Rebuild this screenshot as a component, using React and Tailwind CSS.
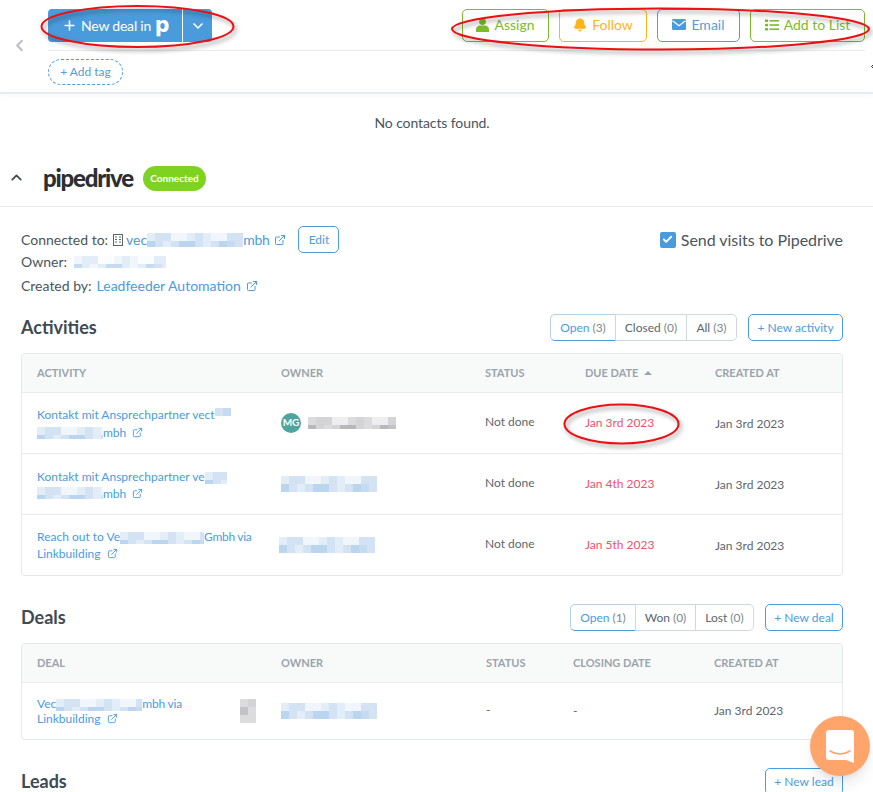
import { ChevronLeft, ChevronUp, ChevronDown, Plus, Bell, ExternalLink, Check } from 'lucide-react';

const blues = ['#fafcfe', '#f1f6fc', '#e3edf8', '#d3e3f4', '#c6dbf1', '#b9d5ef'];
const grays = ['#f7f7f8', '#eeeeef', '#dcdcde', '#d4d3d6', '#c3c3c7', '#b8b8bc'];

// pixelated name, the reference has these smeared out
function Blur({ w, h, palette = blues, cell = 8, bias = 2, className = '' }) {
  const cols = Math.ceil(w / cell);
  const rows = Math.ceil(h / cell);
  const cells = [];
  for (let r = 0; r < rows; r++) {
    for (let c = 0; c < cols; c++) {
      const wave = (Math.sin(c * 1.3 + r * 2.1) + 1) * 1.5;
      const rowBias = rows > 1 ? (r / (rows - 1)) * 1.5 : 0.5;
      const idx = Math.min(palette.length - 1, Math.floor(wave + rowBias + bias - 1));
      cells.push(<rect key={`${r}-${c}`} x={c * cell} y={r * cell} width={cell} height={cell} fill={palette[idx]} />);
    }
  }
  return (
    <svg width={w} height={h} className={`inline-block shrink-0 ${className}`}>
      {cells}
    </svg>
  );
}

function Ext({ size = 12, className = '' }) {
  return <ExternalLink size={size} strokeWidth={2} className={`inline-block text-[#4a9be0] ${className}`} />;
}

function PersonIcon() {
  return (
    <svg width="13" height="14" viewBox="0 0 13 14" fill="currentColor">
      <circle cx="6.5" cy="3.6" r="3.4" />
      <path d="M0 14v-2.6C0 9.2 1.9 7.8 4 7.6h5c2.100.2 4 1.600 4 3.800V14z" />
    </svg>
  );
}

function BellIcon() {
  return <Bell size={14} strokeWidth={2.5} fill="currentColor" />;
}

function MailIcon() {
  return (
    <svg width="14" height="11" viewBox="0 0 14 11">
      <rect width="14" height="11" rx="1.2" fill="#4a9bdc" />
      <path d="M0.500 1.800 7 6.800l6.500-5" fill="none" stroke="#fff" strokeWidth="1.200" />
    </svg>
  );
}

function ListIcon() {
  return (
    <svg width="14" height="12" viewBox="0 0 14 12" fill="currentColor">
      <rect x="0" y="0.500" width="3" height="2.500" />
      <rect x="0" y="4.800" width="3" height="2.500" />
      <rect x="0" y="9" width="3" height="2.500" />
      <rect x="4.500" y="1" width="9.500" height="1.600" />
      <rect x="4.500" y="5.200" width="9.500" height="1.600" />
      <rect x="4.500" y="9.400" width="9.500" height="1.600" />
    </svg>
  );
}

function ActionButton({ icon, label, color, width }) {
  return (
    <button className={`h-[33px] pb-[2px] flex items-center justify-center gap-[5px] border rounded-[5px] text-sm ${color} ${width}`}>
      {icon}
      {label}
    </button>
  );
}

function SegTabs({ tabs, className = '' }) {
  return (
    <div className={`flex h-[27px] text-xs text-[#5b6670] ${className}`}>
      {tabs.map((t, i) => (
        <div
          key={t.label}
          className={`flex items-center justify-center gap-[3px] border-y ${t.width} ${
            i === 0
              ? 'border-l border-r border-t-[#b5cfe3] border-l-[#b5cfe3] border-r-[#cfd8de] border-b-[#4a9be0] rounded-l-[5px] text-[#4a9be0]'
              : 'border-r border-[#cfd8de]'
          } ${i === tabs.length - 1 ? 'rounded-r-[5px]' : ''}`}
        >
          <span>{t.label}</span>
          <span className="text-[#7d8890]">({t.count})</span>
        </div>
      ))}
    </div>
  );
}

function SectionHead({ title, tabs, action, actionW }) {
  return (
    <div className="flex items-center h-[27px]">
      <h2 className="text-lg font-bold text-[#3f4a53] flex-1 pb-[2px]">{title}</h2>
      <SegTabs tabs={tabs} className="mr-[11px]" />
      <button className={`h-[27px] border border-[#4a9be0] rounded-[5px] text-xs text-[#4a9be0] ${actionW}`}>{action}</button>
    </div>
  );
}

function Row({ cols, left, owner, status, due, hClass = 'h-[61px]', leftClass = '', createdClass = 'pt-[1px]', last = false }) {
  return (
    <div className={`grid ${cols} items-center pl-[15px] ${hClass} text-xs ${last ? '' : 'border-b border-[#e8ebed]'}`}>
      <div className={`text-[#4a9be0] pr-2 ${leftClass}`}>{left}</div>
      <div className="flex items-center">{owner}</div>
      <div className="text-[#5b6670] pb-[2px]">{status}</div>
      <div>{due}</div>
      <div className={`text-[#5b6670] ${createdClass}`}>Jan 3rd 2023</div>
    </div>
  );
}

function Head({ cols, labels }) {
  return (
    <div className={`grid ${cols} items-center pl-[15px] h-[39px] bg-[#f8fafa] border-b border-[#e8ebed] text-[11px] font-bold text-[#9aa4ab] rounded-t-[4px]`}>
      {labels.map((l) => (
        <div key={l} className="flex items-center gap-[6px]">
          {l}
          {l === 'DUE DATE' && <span className="w-0 h-0 border-x-[4px] border-x-transparent border-b-[4px] border-b-[#9aa4ab]" />}
        </div>
      ))}
    </div>
  );
}

const activityCols = 'grid-cols-[244px_204px_100px_130px_1fr]';
const dealCols = 'grid-cols-[244px_205px_87px_141px_1fr]';

export default function App() {
  return (
    <div className="relative w-[873px] h-[792px] overflow-hidden bg-white font-['Lato',sans-serif] text-[#4a5560]">
      {/* top bar */}
      <div className="relative h-[94px] flex border-b-2 border-[#e8ebef] shadow-[0_2px_5px_rgba(0,0,0,0.03)]">
        <div className="w-[48px] flex items-center pl-[10px] pb-[2px]">
          <ChevronLeft size={19} strokeWidth={2.5} className="text-[#b9bec3]" />
        </div>
        <div className="w-[817px] pt-[9px]">
          <div className="flex justify-between h-[42px] border-b border-[#e8ebed]">
            <div className="flex h-[33px] rounded-[4px] overflow-hidden bg-[#4a9bdc] text-white text-sm">
              <div className="w-[134px] flex items-center pl-[14px] gap-[4px] tracking-[-0.2px]">
                <Plus size={15} strokeWidth={2.5} />
                <span>New deal in</span>
                <span className="font-['Inter',sans-serif] text-[22px] leading-none font-extrabold -mt-[3px]">p</span>
              </div>
              <div className="w-[30px] flex items-center justify-center border-l border-white">
                <ChevronDown size={16} strokeWidth={2.5} />
              </div>
            </div>
            <div className="flex gap-[10px]">
              <ActionButton icon={<PersonIcon />} label="Assign" width="w-[87px]" color="border-[#7cbb2c] text-[#7cbb2c]" />
              <ActionButton icon={<BellIcon />} label="Follow" width="w-[88px]" color="border-[#ffb515] text-[#ffb515]" />
              <ActionButton icon={<MailIcon />} label="Email" width="w-[83px]" color="border-[#5b9bd5] text-[#5b9bd5]" />
              <ActionButton icon={<ListIcon />} label="Add to List" width="w-[115px]" color="border-[#7cbb2c] text-[#7cbb2c]" />
            </div>
          </div>
          <div className="pt-[7px]">
            <button className="w-[75px] h-[26px] rounded-full border border-dashed border-[#4a9be0] text-xs text-[#5b9bd5]">+ Add tag</button>
          </div>
        </div>
        <ChevronLeft size={7} strokeWidth={3} className="absolute left-[869px] top-[63px] text-black" />
      </div>

      <p className="w-[864px] pt-[20px] text-center text-sm leading-[18px] tracking-[-0.1px]">No contacts found.</p>

      {/* pipedrive header */}
      <div className="mt-[22px] h-[53px] flex items-center border-b border-[#e8ebed] pb-[5px]">
        <ChevronUp size={17} strokeWidth={2.5} className="ml-[8px] text-[#3f4a53]" />
        <span className="ml-[18px] text-[24px] font-black tracking-[-1.2px] text-[#2b2f33]">pipedrive</span>
        <span className="ml-[10px] mt-[1px] w-[63px] h-[25px] rounded-full bg-[#7ed321] text-white text-[10px] font-bold flex items-center justify-center">Connected</span>
      </div>

      <div className="px-[21px] w-[864px]">
        {/* connection info */}
        <div className="h-[87px] text-sm">
          <div className="flex items-center h-[27px] mt-[19px]">
            <span>Connected to:</span>
            <svg width="10" height="12" viewBox="0 0 10 12" className="ml-[5px] text-[#5b6670]" fill="none" stroke="currentColor">
              <rect x="0.500" y="0.500" width="9" height="11" />
              <path d="M2 3h2M6 3h2M2 5.500h2M6 5.500h2M2 8h2M6 8h2" />
            </svg>
            <span className="ml-[3px] text-[#4a9be0]">vec</span>
            <Blur w={96} h={14} />
            <span className="text-[#4a9be0] tracking-[-0.3px]">mbh</span>
            <Ext className="ml-[5px]" />
            <button className="ml-[12px] w-[41px] h-[27px] border border-[#4a9be0] rounded-[5px] text-xs text-[#4a9be0]">Edit</button>
            <label className="ml-auto flex items-center gap-[5px] text-base tracking-[-0.04px]">
              <span className="w-4 h-4 rounded-[2px] bg-[#4a9bdc] flex items-center justify-center">
                <Check size={11} strokeWidth={4} className="text-white" />
              </span>
              Send visits to Pipedrive
            </label>
          </div>
          <div className="flex items-center h-[18px]">
            <span>Owner:</span>
            <Blur w={92} h={12} bias={1} className="ml-[7px]" />
          </div>
          <div className="flex items-center h-[18px] mt-[6px]">
            <span>Created by:</span>
            <span className="ml-[5px] text-[#4a9be0]">Leadfeeder Automation</span>
            <Ext className="ml-[5px]" />
          </div>
        </div>

        {/* activities */}
        <div className="mt-[1px]">
          <SectionHead
            title="Activities"
            action="+ New activity"
            actionW="w-[95px]"
            tabs={[
              { label: 'Open', count: 3, width: 'w-[66px]' },
              { label: 'Closed', count: 0, width: 'w-[71px]' },
              { label: 'All', count: 3, width: 'w-[50px]' },
            ]}
          />
          <div className="mt-[12px] border border-[#e4e8ea] rounded-[4px]">
            <Head cols={activityCols} labels={['ACTIVITY', 'OWNER', 'STATUS', 'DUE DATE', 'CREATED AT']} />
            <Row
              cols={activityCols}
              leftClass="pt-[3px] leading-[18px]"
              left={<>Kontakt mit Ansprechpartner vect<Blur w={16} h={8} className="align-top mt-[2px]" /><br /><span className="inline-flex items-center"><Blur w={66} h={12} />mbh<Ext size={11} className="ml-[6px]" /></span></>}
              owner={<><span className="w-5 h-5 rounded-full bg-[#4fa59e] text-white text-[10px] font-bold flex items-center justify-center">MG</span><Blur w={88} h={12} palette={grays} className="ml-[7px]" /></>}
              status="Not done"
              due={<span className="text-[#f4506a]">Jan 3rd 2023</span>}
            />
            <Row
              cols={activityCols}
              leftClass="pt-[3px] leading-[17px]"
              left={<>Kontakt mit Ansprechpartner ve<Blur w={22} h={12} className="align-middle" /><br /><span className="inline-flex items-center"><Blur w={66} h={12} />mbh<Ext size={11} className="ml-[6px]" /></span></>}
              owner={<Blur w={96} h={16} />}
              status="Not done"
              due={<span className="text-[#f4506a]">Jan 4th 2023</span>}
            />
            <Row
              cols={activityCols}
              leftClass="leading-[17px]"
              left={<>Reach out to Ve<Blur w={84} h={12} className="align-middle" /><span className="tracking-[-0.3px]">Gmbh via</span><br /><span className="inline-flex items-center">Linkbuilding<Ext size={11} className="ml-[6px]" /></span></>}
              owner={<Blur w={96} h={16} className="-ml-[2px]" />}
              status="Not done"
              due={<span className="text-[#f4506a]">Jan 5th 2023</span>}
              hClass="h-[60px]"
              last
            />
          </div>
        </div>

        {/* deals */}
        <div className="mt-[28px]">
          <SectionHead
            title="Deals"
            action="+ New deal"
            actionW="w-[78px]"
            tabs={[
              { label: 'Open', count: 1, width: 'w-[66px]' },
              { label: 'Won', count: 0, width: 'w-[60px]' },
              { label: 'Lost', count: 0, width: 'w-[58px]' },
            ]}
          />
          <div className="mt-[12px] border border-[#e4e8ea] rounded-[4px]">
            <Head cols={dealCols} labels={['DEAL', 'OWNER', 'STATUS', 'CLOSING DATE', 'CREATED AT']} />
            <Row
              cols={dealCols}
              leftClass="leading-[15px]"
              createdClass="pb-[1px]"
              left={<div className="flex items-center"><div className="w-[188px] shrink-0">Vec<Blur w={86} h={12} className="align-middle" /><span className="tracking-[-0.2px]">mbh via</span><br /><span className="inline-flex items-center">Linkbuilding<Ext size={11} className="ml-[6px]" /></span></div><Blur w={16} h={24} palette={grays} className="ml-[15px]" /></div>}
              owner={<Blur w={96} h={16} />}
              status="-"
              due={<span className="text-[#5b6670]">-</span>}
              hClass="h-[56px]"
              last
            />
          </div>
        </div>

        {/* leads */}
        <div className="mt-[28px]">
          <div className="flex items-center h-[27px]">
            <h2 className="text-lg font-bold text-[#3f4a53] flex-1 pb-[2px]">Leads</h2>
            <button className="w-[78px] h-[27px] border border-[#4a9be0] rounded-[5px] text-xs text-[#4a9be0]">+ New lead</button>
          </div>
        </div>
      </div>

      {/* chat bubble */}
      <div className="absolute left-[810px] top-[716px] w-[60px] h-[60px] rounded-full bg-[#ffa56b] shadow-lg flex items-center justify-center">
        <svg width="28" height="33" viewBox="0 0 28 33">
          <path d="M3 0h22a3 3 0 0 1 3 3v30l-8-3H3a3 3 0 0 1-3-3V3a3 3 0 0 1 3-3z" fill="#fff" />
          <path d="M4 21c6 4 14 4 20 0" fill="none" stroke="#ffa56b" strokeWidth="1.6" strokeLinecap="round" />
        </svg>
      </div>

      {/* red annotation ellipses */}
      <svg width="873" height="792" className="absolute left-0 top-0 pointer-events-none drop-shadow-[2px_3px_2px_rgba(0,0,0,0.4)]">
        <g fill="none" stroke="#ee0f12" strokeWidth="2">
          <ellipse cx="137.5" cy="26.5" rx="96" ry="20.5" />
          <ellipse cx="660.5" cy="29" rx="208.5" ry="20.5" />
          <ellipse cx="621.5" cy="424" rx="57" ry="19.5" />
        </g>
      </svg>
    </div>
  );
}
